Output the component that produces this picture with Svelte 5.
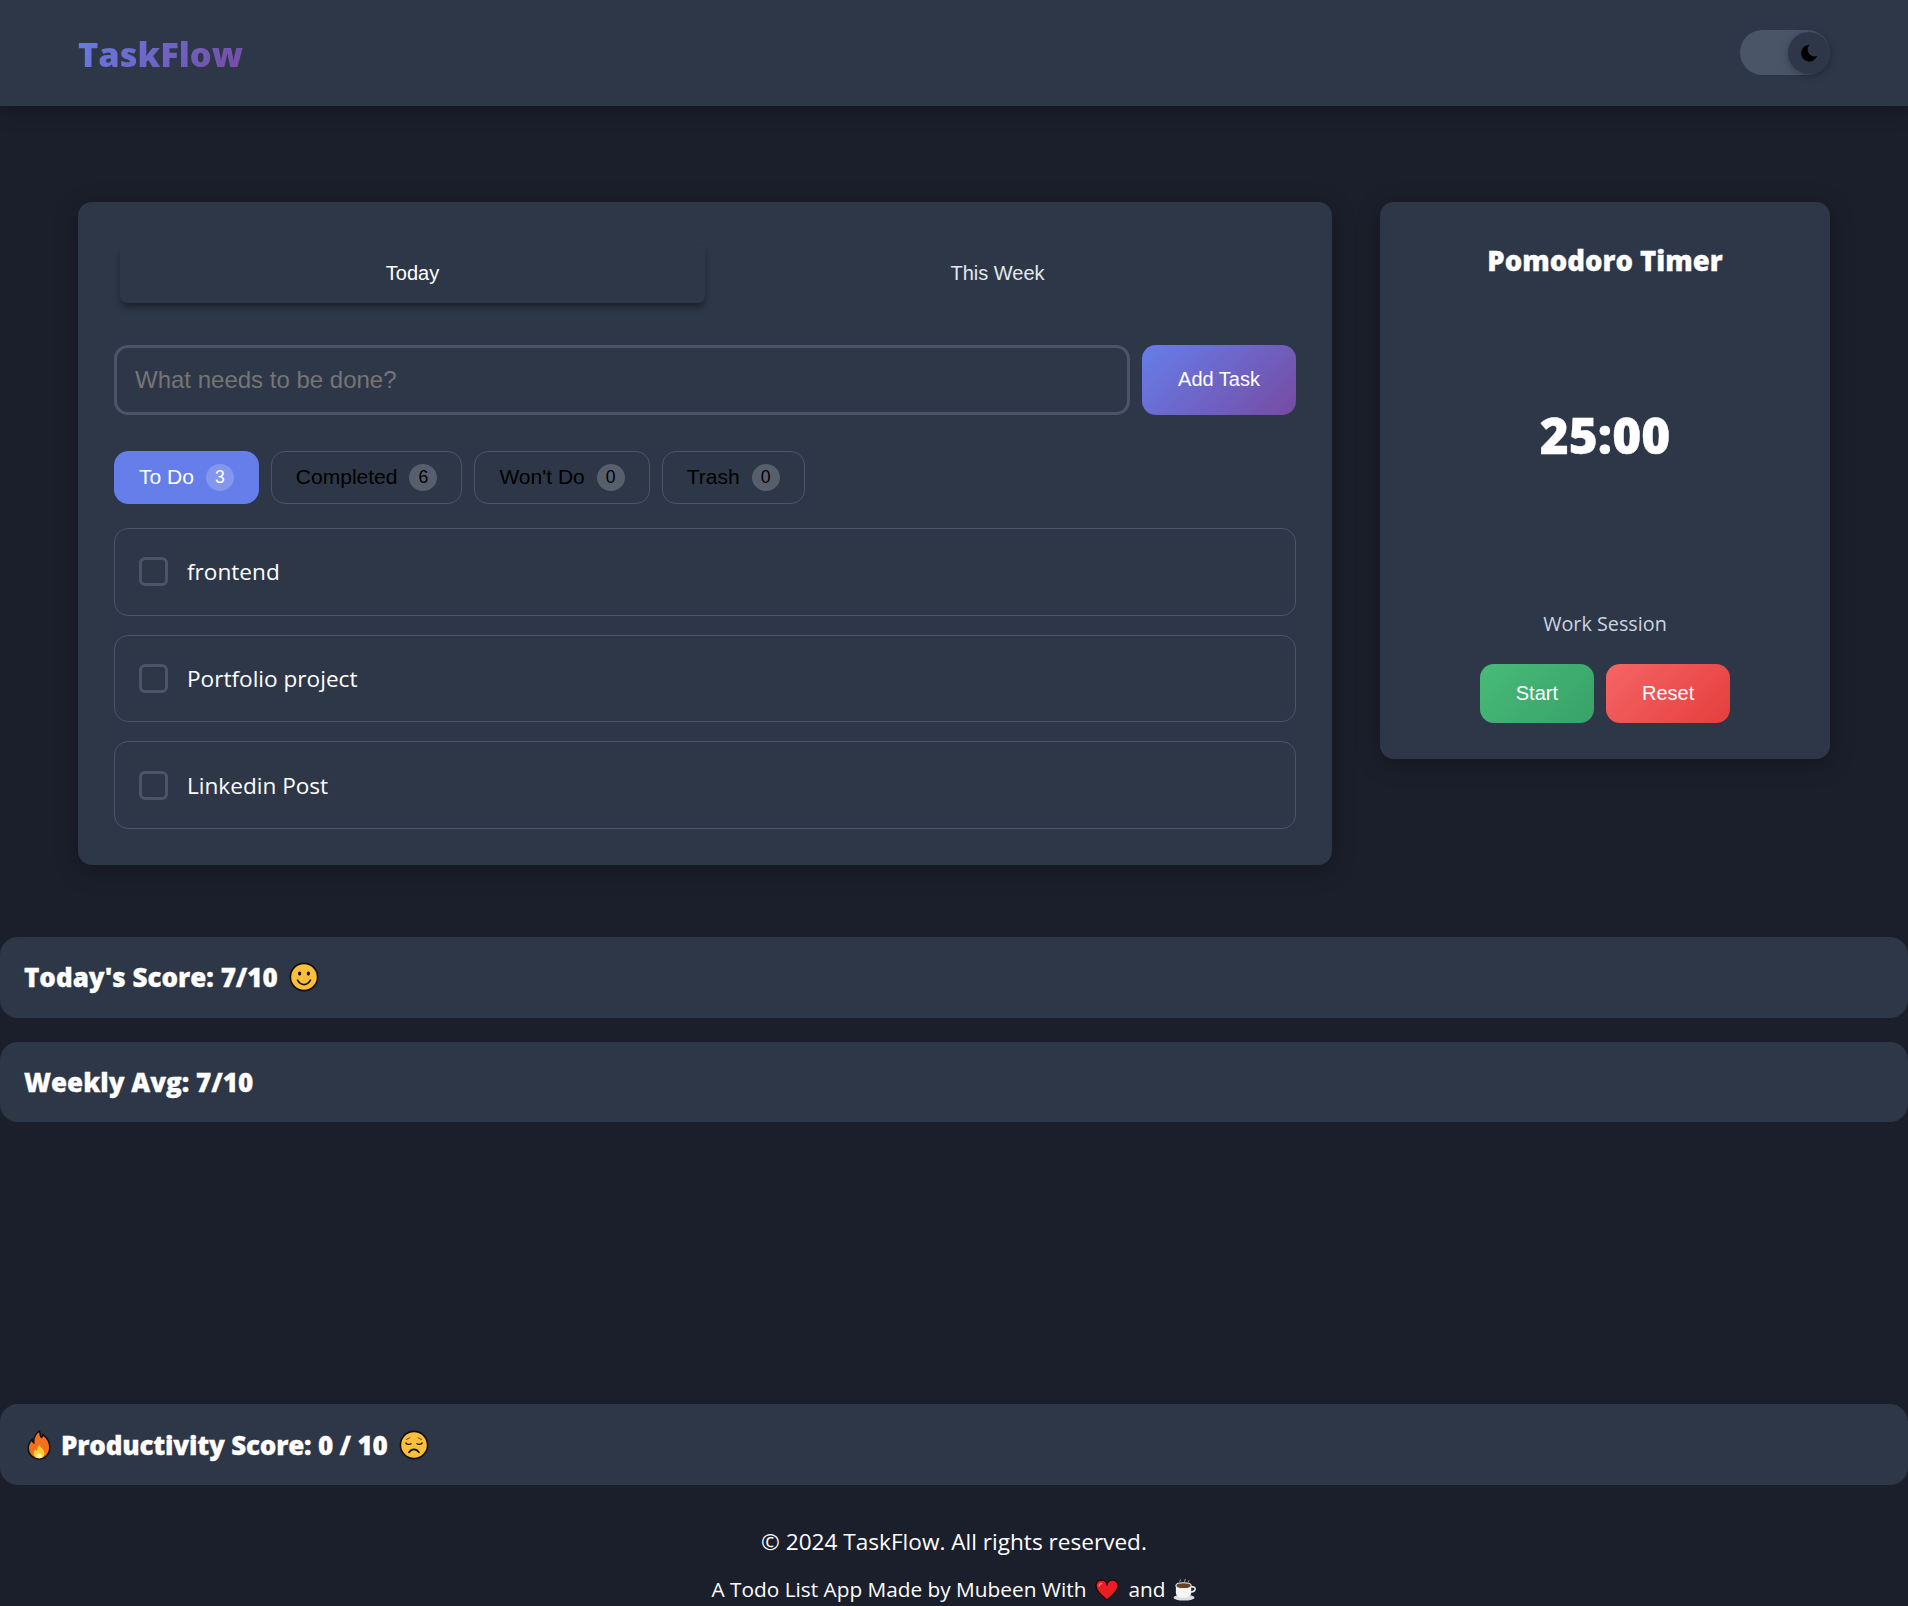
<script>
  const filters = [
    { label: 'To Do', count: 3, active: true },
    { label: 'Completed', count: 6 },
    { label: "Won't Do", count: 0 },
    { label: 'Trash', count: 0 }
  ];
  const tasks = ['frontend', 'Portfolio project', 'Linkedin Post'];
</script>

<div class="page">
  <header class="topbar">
    <div class="logo">TaskFlow</div>
    <button class="theme-toggle" aria-label="Toggle theme">
      <span class="knob">
        <svg viewBox="0 0 24 24" width="20" height="20"><path d="M12.5 2.2a10 10 0 1 0 9.4 13.2 8.6 8.6 0 0 1-3.9.9A8.6 8.6 0 0 1 12.5 2.2z" fill="#000" /></svg>
      </span>
    </button>
  </header>

  <main class="content">
    <section class="card tasks">
      <div class="tabs">
        <button class="tab active">Today</button>
        <button class="tab">This Week</button>
      </div>

      <div class="add-row">
        <input type="text" placeholder="What needs to be done?" />
        <button class="add-btn">Add Task</button>
      </div>

      <div class="filters">
        {#each filters as f}
          <button class="filter" class:active={f.active}>
            {f.label}
            <span class="badge">{f.count}</span>
          </button>
        {/each}
      </div>

      <ul class="task-list">
        {#each tasks as task}
          <li class="task">
            <span class="check"></span>
            <span>{task}</span>
          </li>
        {/each}
      </ul>
    </section>

    <aside class="card pomodoro">
      <h2>Pomodoro Timer</h2>
      <div class="timer">25:00</div>
      <div class="session">Work Session</div>
      <div class="timer-btns">
        <button class="start">Start</button>
        <button class="reset">Reset</button>
      </div>
    </aside>
  </main>

  <div class="score-bar">
    Today's Score: 7/10
    <svg viewBox="0 0 30 30" width="30" height="30">
      <circle cx="15" cy="15" r="13.6" fill="#fcbf3b" stroke="#111" stroke-width="1.6" />
      <ellipse cx="10.6" cy="11.6" rx="1.6" ry="2.1" fill="#111" />
      <ellipse cx="19.4" cy="11.6" rx="1.6" ry="2.1" fill="#111" />
      <path d="M8.6 18.2c1.6 3 3.8 4.4 6.4 4.4s4.8-1.4 6.4-4.4" fill="none" stroke="#111" stroke-width="1.6" stroke-linecap="round" />
    </svg>
  </div>
  <div class="score-bar second">Weekly Avg: 7/10</div>

  <div class="chart-space"></div>

  <div class="score-bar productivity">
    <svg class="fire" viewBox="0 0 24 30" width="24" height="30">
      <path d="M12.5 1c1 3 .2 4.8 1.8 6.4 1.1-.6 1.6-1.6 1.7-2.8 3.6 2.8 6.8 7.6 6.8 12.6 0 6.8-4.9 11.8-10.8 11.8S1.2 24 1.2 18.2c0-3.6 1.8-6.4 3.9-8.6.1 1.6.6 2.6 1.7 3.2C6.5 8.2 9 3.4 12.5 1z" fill="#f4701d" stroke="#111" stroke-width="1.5" />
      <path d="M12.5 15c.6 2.4 4.9 4 4.9 8.4 0 3-2.3 4.9-5.4 4.9s-5.300-2-5.300-4.700c0-2 1.100-3.300 2.200-4.300.2 1 .6 1.500 1.200 1.800-.1-2.200.8-4.500 2.400-6.100z" fill="#fdd230" />
      <ellipse cx="12" cy="26" rx="2.8" ry="2.2" fill="#fff3b0" />
    </svg>
    Productivity Score: 0 / 10
    <svg viewBox="0 0 30 30" width="30" height="30">
      <circle cx="15" cy="15" r="13.6" fill="#fcbf3b" stroke="#111" stroke-width="1.6" />
      <path d="M6.8 13c1.2 1.500 3.600 1.700 5.200.7M23.200 13c-1.200 1.500-3.600 1.700-5.200.7" fill="none" stroke="#111" stroke-width="1.3" stroke-linecap="round" />
      <path d="M7.4 9.400l3.400-1.600M22.600 9.400L19.200 7.800" fill="none" stroke="#8a5a18" stroke-width="1.1" stroke-linecap="round" />
      <path d="M10 22.400c1.300-2 3-3 5-3s3.700 1 5 3" fill="none" stroke="#111" stroke-width="1.7" stroke-linecap="round" />
    </svg>
  </div>

  <footer class="footer">
    <p class="rights">© 2024 TaskFlow. All rights reserved.</p>
    <p class="made">
      A Todo List App Made by Mubeen With
      <svg viewBox="0 0 24 22" width="24" height="22">
        <path d="M12 21C5 15.500 1 11.500 1 7a5.600 5.600 0 0 1 11-1.800A5.600 5.600 0 0 1 23 7c0 4.500-4 8.500-11 14z" fill="#ea1c24" stroke="#1c0608" stroke-width="1.3" />
        <path d="M4 7c.3-1.500 1.400-2.400 2.800-2.500" fill="none" stroke="#f77" stroke-width="1.4" stroke-linecap="round" />
      </svg>
      and
      <svg class="cup" viewBox="0 0 24 24" width="23" height="23">
        <ellipse cx="11.5" cy="20.5" rx="11" ry="3" fill="#dcdcdc" />
        <path d="M3 8h16v7c0 3.500-3 5.500-8 5.500S3 18.500 3 15z" fill="#f6f6f6" />
        <ellipse cx="11" cy="8" rx="8" ry="3" fill="#6b3f22" stroke="#eee" stroke-width="1.1" />
        <path d="M19 9.500c3-.8 4.500.5 4 2.500-.4 1.700-2.400 2.600-4.500 2.500" fill="none" stroke="#eee" stroke-width="1.6" />
        <path d="M7 4l1-2.500M12 4l1-3M16 4.500l.6-2" stroke="#a5a5a5" stroke-width="1" />
      </svg>
    </p>
  </footer>
</div>

<style>
  :global(body) {
    margin: 0;
    background: #1b1f2b;
  }

  .page {
    min-height: 1606px;
    background: #1b1f2b;
    color: #fff;
    font-family: "Open Sans", sans-serif;
    overflow: hidden;
  }

  button {
    font-family: "Liberation Sans", Arial, sans-serif;
    font-size: 20px;
    border: none;
    cursor: pointer;
  }

  .topbar {
    height: 106px;
    box-sizing: border-box;
    padding: 0 78px;
    display: flex;
    align-items: center;
    justify-content: space-between;
    background: #2d3748;
    box-shadow: 0 4px 20px rgba(0, 0, 0, 0.3);
  }

  .logo {
    margin-top: 1px;
    font-size: 34.4px;
    font-weight: 800;
    background: linear-gradient(135deg, #667eea, #764ba2);
    -webkit-background-clip: text;
    background-clip: text;
    color: transparent;
  }

  .theme-toggle {
    width: 90px;
    height: 45px;
    margin-bottom: 1px;
    padding: 0 0 0 48px;
    border-radius: 23px;
    background: #4a5568;
    display: flex;
    align-items: center;
  }

  .knob {
    width: 42px;
    height: 42px;
    border-radius: 50%;
    background: #2d3748;
    display: flex;
    align-items: center;
    justify-content: center;
    box-shadow: 0 2px 8px rgba(0, 0, 0, 0.3);
  }

  .content {
    display: grid;
    grid-template-columns: 1fr 450px;
    gap: 48px;
    align-items: start;
    padding: 96px 78px 72px;
  }

  .card {
    background: #2d3748;
    border-radius: 14px;
    padding: 36px;
    box-shadow: 0 5px 24px rgba(0, 0, 0, 0.25);
  }

  .tabs {
    display: grid;
    grid-template-columns: 1fr 1fr;
    padding: 6px;
    margin-bottom: 36px;
  }

  .tab {
    height: 59px;
    background: transparent;
    color: #e2e8f0;
    border-radius: 7px;
  }

  .tab.active {
    background: #2d3748;
    color: #fff;
    box-shadow: 0 5px 7px -1px rgba(0, 0, 0, 0.4);
  }

  .add-row {
    display: flex;
    gap: 12px;
    margin-bottom: 36px;
  }

  input {
    flex: 1;
    height: 70px;
    box-sizing: border-box;
    padding: 0 18px;
    background: #2d3748;
    border: 3px solid #4a5568;
    border-radius: 14px;
    font-family: "Liberation Sans", Arial, sans-serif;
    font-size: 24px;
    color: #fff;
    outline: none;
  }

  input::placeholder {
    color: #757575;
  }

  .add-btn {
    width: 154px;
    height: 70px;
    padding-bottom: 3px;
    border-radius: 14px;
    color: #fff;
    background: linear-gradient(135deg, #667eea, #764ba2);
  }

  .filters {
    display: flex;
    gap: 12px;
    margin-bottom: 24px;
  }

  .filter {
    height: 53px;
    box-sizing: border-box;
    padding: 0 24px 2px;
    display: flex;
    align-items: center;
    gap: 12px;
    font-size: 21px;
    background: transparent;
    border: 1.2px solid #4a5568;
    border-radius: 14px;
    color: #000;
  }

  .filter.active {
    background: #667eea;
    border-color: #667eea;
    color: #fff;
  }

  .badge {
    width: 28px;
    height: 27px;
    margin-top: 2px;
    border-radius: 50%;
    background: rgba(255, 255, 255, 0.2);
    font-size: 17.6px;
    display: flex;
    align-items: center;
    justify-content: center;
  }

  .task-list {
    list-style: none;
    margin: 0;
    padding: 0;
    display: flex;
    flex-direction: column;
    gap: 18.9px;
  }

  .task {
    height: 87.8px;
    box-sizing: border-box;
    padding: 0 24px;
    display: flex;
    align-items: center;
    gap: 19px;
    border: 1.2px solid #4a5568;
    border-radius: 14px;
    font-size: 22.6px;
  }

  .check {
    width: 29px;
    height: 29px;
    box-sizing: border-box;
    border: 3px solid #4a5568;
    border-radius: 6px;
  }

  .pomodoro {
    display: flex;
    flex-direction: column;
    align-items: center;
  }

  .pomodoro h2 {
    margin: 0;
    font-size: 27.5px;
    line-height: 46px;
    font-weight: 800;
    -webkit-text-stroke: 0.3px #fff;
  }

  .timer {
    height: 292px;
    margin: 5px 0 27px;
    display: flex;
    align-items: center;
    justify-content: center;
    font-size: 49.5px;
    font-weight: 800;
    -webkit-text-stroke: 0.4px #fff;
  }

  .session {
    font-size: 19.8px;
    line-height: 32px;
    color: #cbd5e0;
    margin-bottom: 24px;
  }

  .timer-btns {
    display: flex;
    gap: 12px;
  }

  .timer-btns button {
    height: 59px;
    padding: 0 36px;
    border-radius: 14px;
    color: #fff;
  }

  .start {
    background: linear-gradient(135deg, #48bb78, #38a169);
  }

  .reset {
    background: linear-gradient(135deg, #f56565, #e53e3e);
  }

  .score-bar {
    height: 80.4px;
    box-sizing: border-box;
    padding: 0 24px;
    display: flex;
    align-items: center;
    gap: 11px;
    background: #2d3748;
    border-radius: 18px;
    font-size: 26px;
    font-weight: 800;
    -webkit-text-stroke: 0.3px #fff;
  }

  .second {
    margin-top: 24px;
  }

  .productivity {
    height: 81px;
    padding-top: 1px;
    letter-spacing: -0.19px;
  }

  .fire {
    margin-left: 3px;
    margin-right: -1px;
  }

  .chart-space {
    height: 282px;
  }

  .footer {
    padding-top: 40.4px;
    display: flex;
    flex-direction: column;
    align-items: center;
    gap: 15px;
  }

  .footer p {
    margin: 0;
    line-height: 33px;
  }

  .rights {
    font-size: 22.6px;
  }

  .made {
    display: flex;
    align-items: center;
    gap: 9px;
    font-size: 20.8px;
  }

  .cup {
    margin-left: -1px;
  }
</style>
